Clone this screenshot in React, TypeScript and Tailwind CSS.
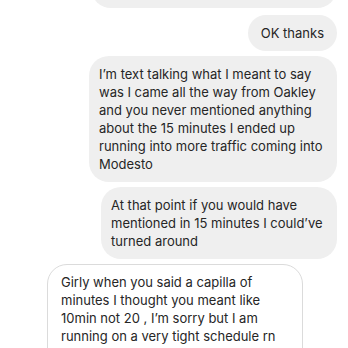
const third = [
  "I’m text talking what I meant to say",
  "was I came all the way from Oakley",
  "and you never mentioned anything",
  "about the 15 minutes I ended up",
  "running into more traffic coming into",
  "Modesto",
];

const fourth = [
  "At that point if you would have",
  "mentioned in 15 minutes I could’ve",
  "turned around",
];

const last = [
  "Girly when you said a capilla of",
  "minutes I thought you meant like",
  "10min not 20 , I’m sorry but I am",
  "running on a very tight schedule rn",
  "and I have places to be after",
];

function Lines({ lines }: { lines: string[] }) {
  return (
    <>
      {lines.map((l, i) => (
        <div key={i} className="whitespace-nowrap">
          {l}
        </div>
      ))}
    </>
  );
}

export default function App() {
  return (
    <div className="w-[348px] h-[348px] overflow-hidden bg-white flex flex-col font-['Inter',sans-serif] text-[13px] leading-[18px] text-[#262626]">
      <div className="flex flex-col items-end pr-[11px] gap-[5px]">
        {/* previous message, cut off at the top */}
        <div className="-mt-[32px] mb-[2px] h-[40px] w-[246px] rounded-[20px] bg-[#efefef]" />

        <div className="rounded-full bg-[#efefef] px-[13px] py-[9px]">OK thanks</div>

        <div className="w-[248px] rounded-[20px] bg-[#efefef] px-[10px] py-[9px]">
          <Lines lines={third} />
        </div>

        <div className="w-[236px] rounded-[20px] bg-[#efefef] px-[10px] py-[9px]">
          <Lines lines={fourth} />
        </div>
      </div>

      {/* last message runs past the bottom edge, as in the screenshot */}
      <div className="mt-[5px] ml-[47px] w-[256px] shrink-0 rounded-[20px] border border-[#dbdbdb] bg-white px-[13px] pt-[8px] pb-[8px]">
        <Lines lines={last} />
      </div>
    </div>
  );
}
